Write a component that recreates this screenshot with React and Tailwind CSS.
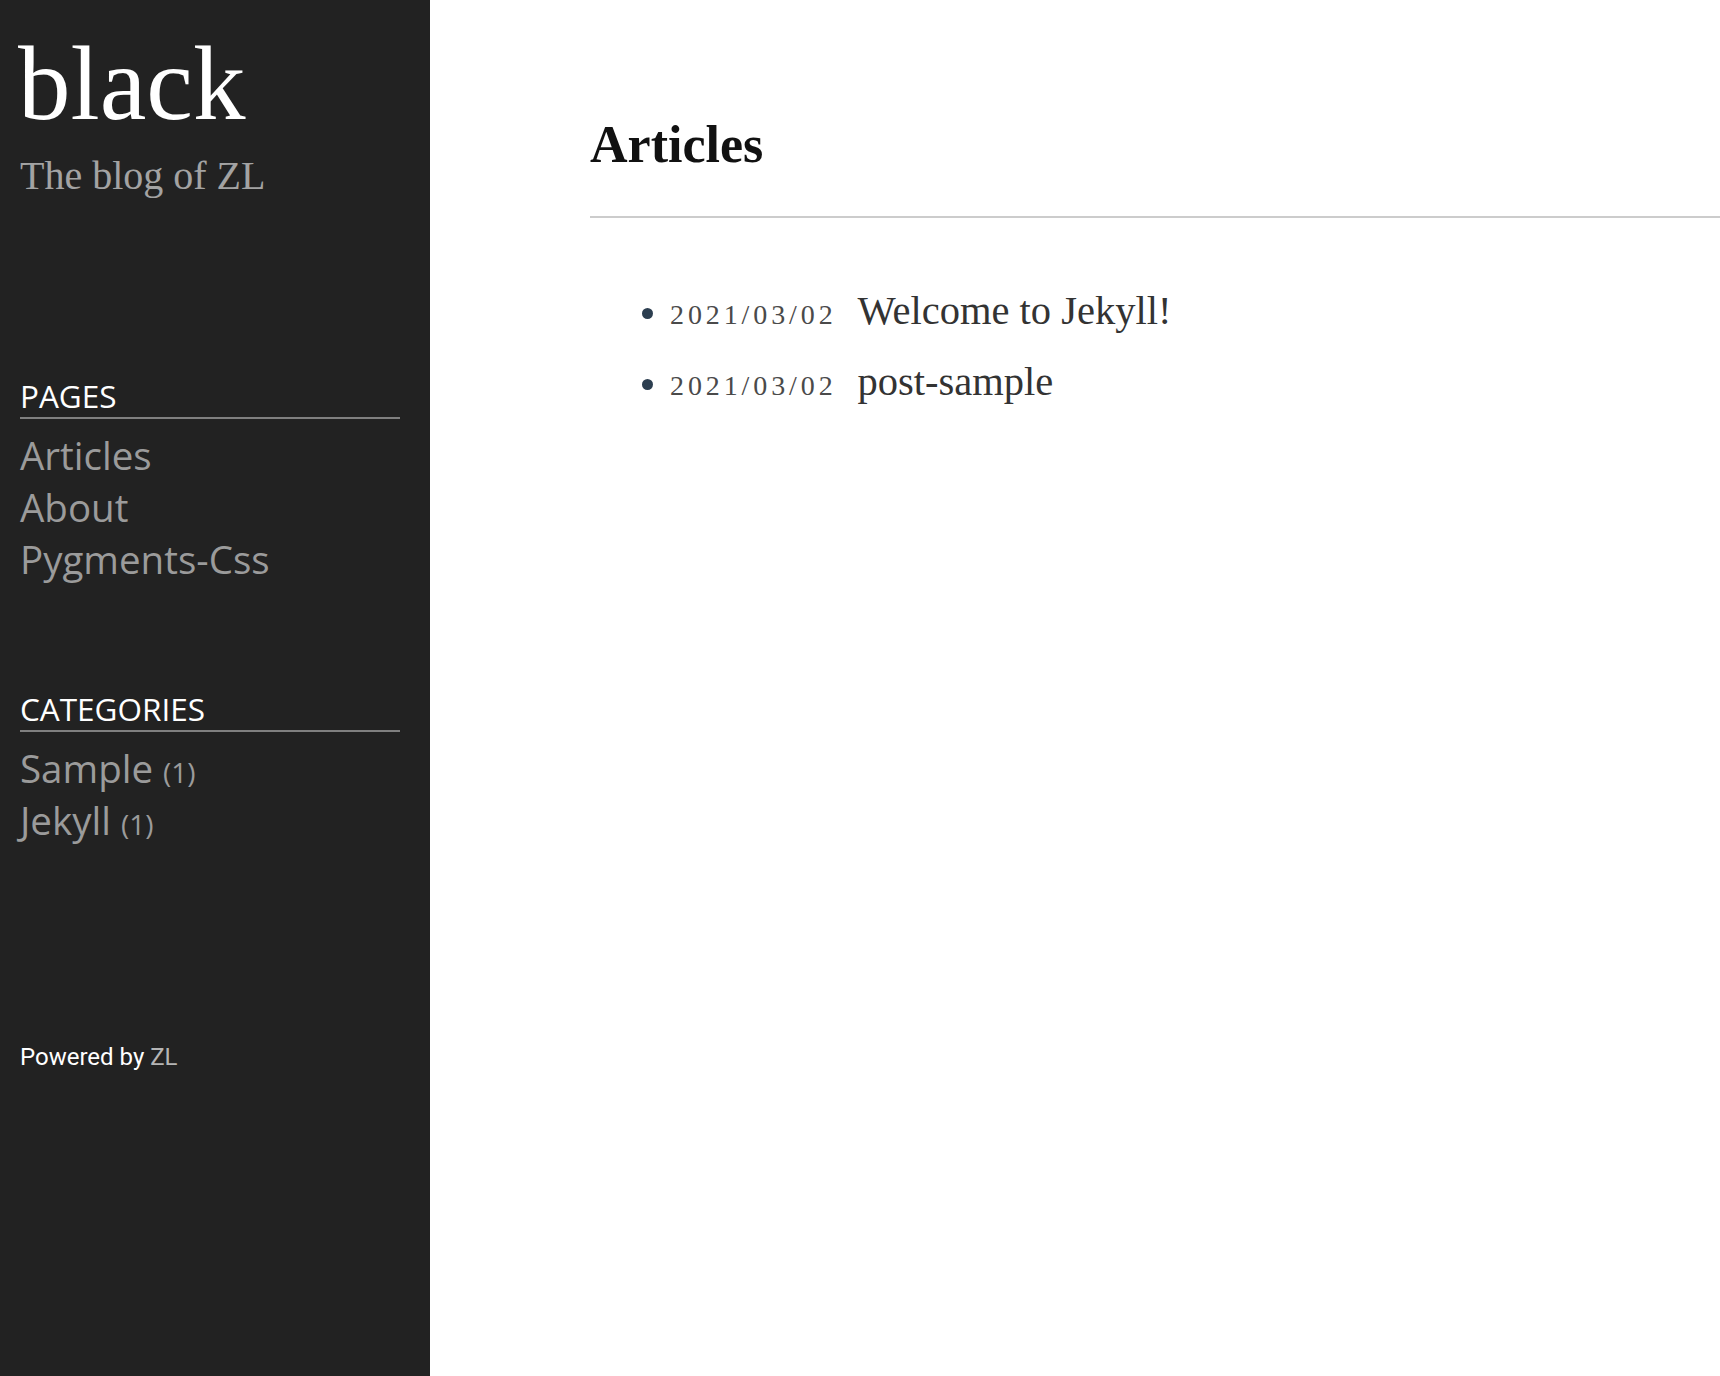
import React from 'react';

const PAGES = ['Articles', 'About', 'Pygments-Css'];
const CATEGORIES = [
  { name: 'Sample', count: 1 },
  { name: 'Jekyll', count: 1 },
];
const POSTS = [
  { date: '2021/03/02', title: 'Welcome to Jekyll!' },
  { date: '2021/03/02', title: 'post-sample' },
];

/* ── Sidebar section ─────────────────────────────────────── */
const SideSection = ({ title, children }) => (
  <div>
    <h2 className="text-[31.5px] leading-[36px] text-white uppercase pb-[3px] border-b-2 border-[#808080]">
      {title}
    </h2>
    <ul className="mt-[10px]">{children}</ul>
  </div>
);

export default function App() {
  return (
    <div className="flex min-h-screen bg-white">
      {/* ── Sidebar ── */}
      <aside className="w-[430px] shrink-0 bg-[#222222] pl-[20px] pr-[30px] pt-[30px] font-['Open_Sans',sans-serif]">
        <h1 className="font-['Liberation_Serif',serif] text-[105px] leading-[108px] text-white -ml-[2px]">
          black
        </h1>
        <p className="font-['Liberation_Serif',serif] text-[40px] leading-[48px] text-[#a3a3a3] mt-[14px]">
          The blog of ZL
        </p>

        <div className="mt-[178px]">
          <SideSection title="Pages">
            {PAGES.map(p => (
              <li key={p} className="text-[38.5px] leading-[52px] text-[#9b9b9b]">
                {p}
              </li>
            ))}
          </SideSection>
        </div>

        <div className="mt-[106px]">
          <SideSection title="Categories">
            {CATEGORIES.map(c => (
              <li key={c.name} className="text-[38.5px] leading-[52px] text-[#9b9b9b]">
                {c.name} <span className="text-[28px] leading-none">({c.count})</span>
              </li>
            ))}
          </SideSection>
        </div>

        <p className="mt-[197px] font-['Roboto',sans-serif] text-[24px] leading-[28px] text-white">
          Powered by <span className="text-[#b5b5b5]">ZL</span>
        </p>
      </aside>

      {/* ── Main ── */}
      <main className="flex-1 pl-[160px] pt-[113px] font-['Liberation_Serif',serif]">
        <h1 className="text-[52px] leading-[64px] font-bold text-[#111111]">Articles</h1>
        <hr className="mt-[39px] border-0 h-[2px] bg-[#cccccc]" />

        <ul className="list-disc pl-[80px] mt-[59px] marker:text-[#2c3e50]">
          {POSTS.map(post => (
            <li key={post.title} className="text-[36px] leading-[71px]">
              <span className="text-[28px] leading-none tracking-[3.9px] text-[#4a4a4a]">
                {post.date}
              </span>
              <span className="ml-[21px] text-[40.5px] leading-none text-[#333333]">
                {post.title}
              </span>
            </li>
          ))}
        </ul>
      </main>
    </div>
  );
}
